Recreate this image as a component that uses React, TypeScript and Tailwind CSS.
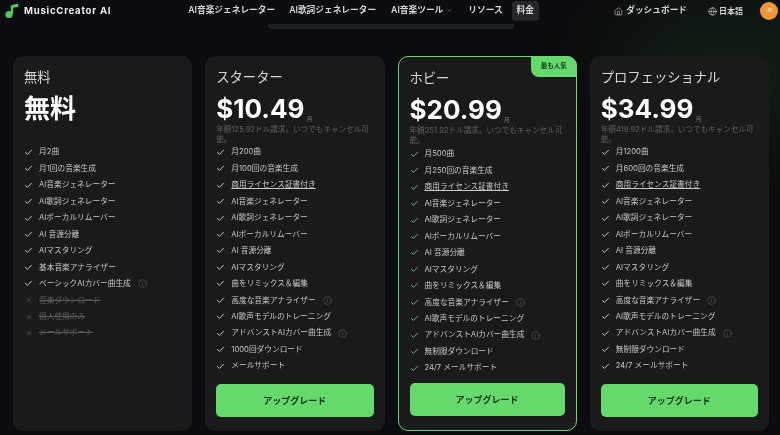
import React from 'react';
import { Check, X, Info, ChevronDown, Globe, House } from 'lucide-react';

type Feature = { label: string; info?: boolean; off?: boolean; underline?: boolean };

const base = ['AI音楽ジェネレーター', 'AI歌詞ジェネレーター', 'AIボーカルリムーバー', 'AI 音源分離', 'AIマスタリング'];

const toFeatures = (items: string[]): Feature[] => items.map((label) => ({ label }));

const paid = (a: string, b: string, dl: string, mail: string): Feature[] => [
  { label: a },
  { label: b },
  { label: '商用ライセンス証書付き', underline: true },
  ...toFeatures(base),
  { label: '曲をリミックス＆編集' },
  { label: '高度な音楽アナライザー', info: true },
  { label: 'AI歌声モデルのトレーニング' },
  { label: 'アドバンストAIカバー曲生成', info: true },
  { label: dl },
  { label: mail },
];

const PLANS = [
  {
    name: 'スターター',
    price: '$10.49',
    note: '年額125.92ドル請求。いつでもキャンセル可能。',
    features: paid('月200曲', '月100回の音楽生成', '1000回ダウンロード', 'メールサポート'),
  },
  {
    name: 'ホビー',
    price: '$20.99',
    note: '年額251.92ドル請求。いつでもキャンセル可能。',
    popular: true,
    features: paid('月500曲', '月250回の音楽生成', '無制限ダウンロード', '24/7 メールサポート'),
  },
  {
    name: 'プロフェッショナル',
    price: '$34.99',
    note: '年額419.92ドル請求。いつでもキャンセル可能。',
    features: paid('月1200曲', '月600回の音楽生成', '無制限ダウンロード', '24/7 メールサポート'),
  },
];

const FREE: Feature[] = [
  { label: '月2曲' },
  { label: '月1回の音楽生成' },
  ...toFeatures(base),
  { label: '基本音楽アナライザー' },
  { label: 'ベーシックAIカバー曲生成', info: true },
  { label: '音楽ダウンロード', off: true },
  { label: '個人使用のみ', off: true },
  { label: 'メールサポート', off: true },
];

const FeatureRow: React.FC<{ feature: Feature; green?: boolean }> = ({ feature, green }) => (
  <li className="flex h-[16.46px] items-center">
    {feature.off ? (
      <X size={8} strokeWidth={2} className="w-[8px] ml-[0.5px] mr-[6.5px] text-[#5a5b5e]" />
    ) : (
      <Check size={9} strokeWidth={2.4} className={`mr-[6px] ${green ? 'text-[#63d96b]' : 'text-[#d8d8da]'}`} />
    )}
    <span
      className={`text-[7.7px] whitespace-nowrap ${feature.off ? 'text-[#5a5b5e] line-through' : 'text-[#c8c8cb]'} ${
        feature.underline ? 'underline' : ''
      }`}
    >
      {feature.label}
    </span>
    {feature.info && <Info size={9} strokeWidth={1.3} className="ml-[7px] text-[#6d6e72]" />}
  </li>
);

const UpgradeButton = () => (
  <button className="w-full h-[33px] rounded-[5px] bg-[#65d96c] text-[9px] font-bold text-[#10300f]">
    アップグレード
  </button>
);

const PlanCard: React.FC<{ plan: (typeof PLANS)[number] }> = ({ plan }) => (
  <div
    className={`relative flex flex-col rounded-[10px] bg-[#1a1a1d] px-[11px] pt-[12px] pb-[14px] ${
      plan.popular ? 'border border-[#63d96b]' : ''
    }`}
  >
    {plan.popular && (
      <div className="absolute -right-px -top-px flex h-[21px] w-[46px] items-center justify-center rounded-tr-[10px] rounded-bl-[8px] bg-[#65d96c] text-[6.5px] font-semibold text-[#15401a]">
        最も人気
      </div>
    )}
    <div className="text-[13.3px] leading-[18px] text-[#d6d6d8]">{plan.name}</div>
    <div className="flex items-end mt-[8px] h-[30px]">
      <span className="text-[26px] leading-[30px] font-bold text-white">{plan.price}</span>
      <span className="ml-[2px] mb-[1px] text-[6px] text-[#77787b]">月</span>
    </div>
    <p className="mt-[1px] h-[20px] text-[7.6px] leading-[10px] text-[#5f6063]">{plan.note}</p>
    <ul className={`flex flex-col ${plan.popular ? 'mt-0' : 'mt-[-1px]'}`}>
      {plan.features.map((f) => (
        <FeatureRow key={f.label} feature={f} green={plan.popular} />
      ))}
    </ul>
    <div className="mt-auto">
      <UpgradeButton />
    </div>
  </div>
);

export default function App() {
  return (
    <div
      className="relative flex h-[435px] w-[780px] flex-col overflow-hidden bg-[#0b0c0f] blur-[0.3px]"
      style={{ fontFamily: 'Inter, "Noto Sans CJK JP", sans-serif' }}
    >
      {/* green glow, top right */}
      <div className="absolute right-[-60px] top-[10px] h-[120px] w-[220px] rounded-full bg-[#1c3a1c] opacity-40 blur-[40px]" />

      <header className="relative flex h-[21px] items-center pl-[5px] pr-[2px] pt-[1px] text-[8.7px] font-semibold text-[#d5d5d8]">
        <svg width="14" height="16" viewBox="0 0 14 15">
          <path d="M7 2 L7 10.5" stroke="#4fc95c" strokeWidth="2.4" fill="none" />
          <circle cx="4" cy="11" r="3.6" fill="#4fc95c" />
          <path d="M6 3.6 C6.5 1.6 8 .8 13.5 .6 L13 3.6 C10 3.8 8 4 6 5.4 Z" fill="#4fc95c" />
        </svg>
        <span className="ml-[5px] text-[9.6px] font-bold tracking-[0.75px] text-[#ededee]">MusicCreator AI</span>
        <nav className="ml-[77px] flex items-center">
          <span>AI音楽ジェネレーター</span>
          <span className="ml-[14px]">AI歌詞ジェネレーター</span>
          <span className="ml-[15px] flex items-center">
            AI音楽ツール
            <ChevronDown size={7} className="ml-[3px] text-[#9a9a9d]" />
          </span>
          <span className="ml-[15px]">リソース</span>
          <span className="ml-[9px] rounded-[4px] bg-[#252629] px-[5px] py-[3px]">料金</span>
        </nav>
        <div className="ml-auto flex items-center">
          <House size={9} strokeWidth={1.5} className="mr-[3px]" />
          <span>ダッシュボード</span>
          <Globe size={9} strokeWidth={1.5} className="ml-[21px] mr-[2px]" />
          <span className="text-[8px]">日本語</span>
          <div className="ml-[17px] flex h-[18px] w-[18px] items-center justify-center rounded-full bg-[#f0953a] text-[5px] text-[#f6d9b8]">
            JB
          </div>
        </div>
      </header>

      {/* blurred strip peeking out under the nav */}
      <div className="absolute left-[268px] top-[24px] h-[5px] w-[246px] rounded-b-[4px] bg-[#1c2026]" />

      <main className="relative ml-[13px] mt-[35px] grid h-[375px] w-[756px] grid-cols-4 gap-x-[13px]">
        <div className="flex flex-col rounded-[10px] bg-[#1a1a1d] px-[11px] pt-[12px]">
          <div className="text-[13.3px] leading-[18px] text-[#d6d6d8]">無料</div>
          <div className="mt-[8px] h-[30px] text-[26px] leading-[30px] font-bold text-white">無料</div>
          <ul className="mt-[20px] flex flex-col">
            {FREE.map((f) => (
              <FeatureRow key={f.label} feature={f} />
            ))}
          </ul>
        </div>
        {PLANS.map((p) => (
          <PlanCard key={p.name} plan={p} />
        ))}
      </main>
    </div>
  );
}
